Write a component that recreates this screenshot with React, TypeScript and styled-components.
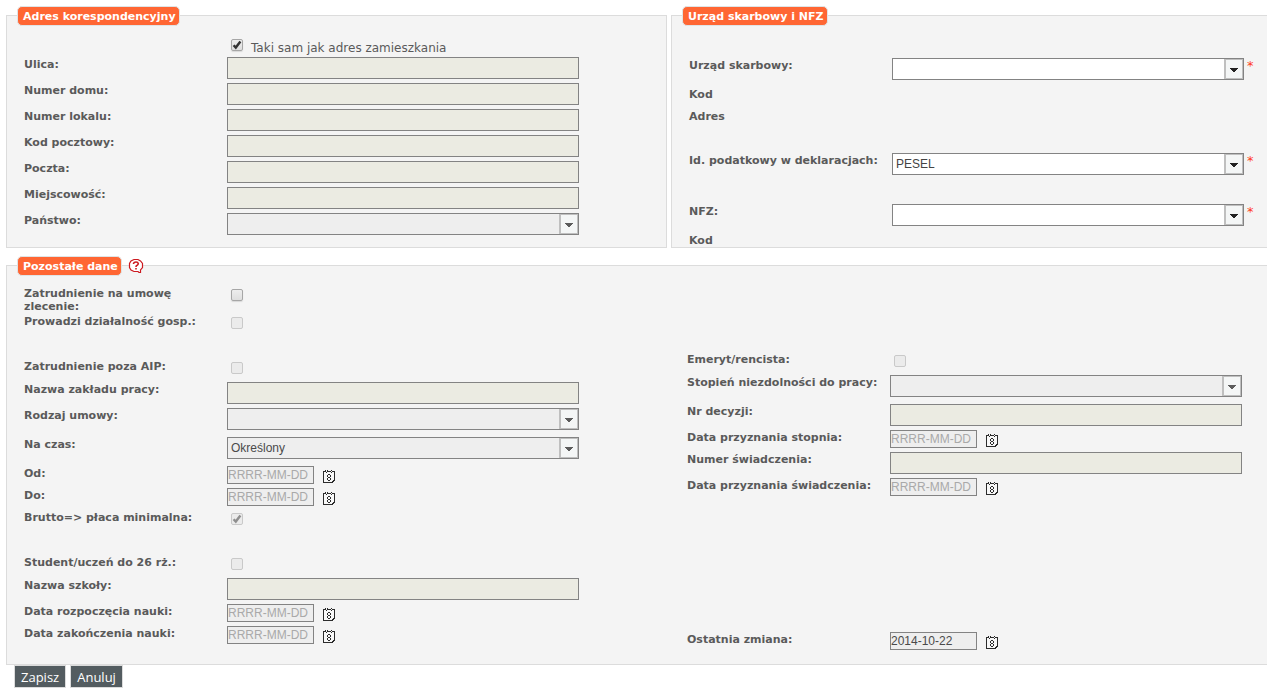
import React from "react";
import styled, { createGlobalStyle, css } from "styled-components";

const GlobalStyle = createGlobalStyle`
  *, *::before, *::after { box-sizing: border-box; }
  body {
    margin: 0;
    background: #fff;
    color: #5a5a5a;
    font-family: Verdana, "DejaVu Sans", sans-serif;
    font-size: 11px;
    line-height: 13px;
  }
`;

const Page = styled.form`
  padding: 6px 0 6px 6px;
  overflow: hidden;
`;

const TopPanels = styled.div`
  display: grid;
  grid-template-columns: 661fr 596fr;
  column-gap: 4px;
  margin-bottom: 8px;
`;

const Panel = styled.fieldset<{ $open?: boolean }>`
  min-width: 0;
  margin: 0;
  padding: 0;
  border: 1px solid #dcdcdc;
  background: #f4f4f4;
  ${(p) => p.$open && css`border-right: 0;`}
`;

const Legend = styled.legend`
  position: relative;
  height: 18px;
  margin-left: 10px;
  padding: 0;
`;

const Badge = styled.span`
  display: block;
  height: 20px;
  padding: 0 3px 0 5px;
  border: 1px solid #dfe4e6;
  border-radius: 5px;
  background: #ff6633;
  color: #fff;
  font-weight: bold;
  line-height: 19px;
  white-space: nowrap;
`;

const HelpButton = styled.button`
  position: absolute;
  top: 2px;
  left: calc(100% + 6px);
  display: block;
  width: 16px;
  height: 16px;
  padding: 0;
  border: 0;
  background: none;
`;

const Columns = styled.div`
  display: grid;
  grid-template-columns: 663fr 597fr;
  padding: 12px 0 10px;
`;

const Column = styled.div<{ $top?: number; $bottom?: number }>`
  display: flex;
  flex-direction: column;
  gap: 22px;
  min-width: 0;
  padding: ${(p) => p.$top ?? 0}px 0 ${(p) => p.$bottom ?? 0}px 17px;
`;

const Group = styled.div<{ $before?: number }>`
  margin-top: ${(p) => p.$before ?? 0}px;
`;

const rowHeights = { date: 22, plain: 22, check: 23, input: 26, tall: 28, select: 29, last: 14 };
type RowKind = keyof typeof rowHeights;

const RowBox = styled.div<{ $kind: RowKind }>`
  display: flex;
  align-items: flex-start;
  height: ${(p) => rowHeights[p.$kind]}px;
`;

const LabelCell = styled.label`
  flex: 0 0 203px;
  padding: 1px 10px 0 0;
  font-weight: bold;
`;

const TextLabel = styled.span`
  padding-top: 1px;
  font-weight: bold;
`;

const controlBorder = css`
  border: 1px solid #838383;
  border-radius: 0;
  margin: 0;
  font-family: Arial, "Liberation Sans", sans-serif;
  font-size: 12px;
`;

const TextInput = styled.input`
  ${controlBorder}
  width: 352px;
  height: 22px;
  padding: 0 3px;
  background: #ebebe2;
`;

const DateInput = styled.input`
  ${controlBorder}
  width: 87px;
  height: 18px;
  padding: 0;
  background: #eeeeee;
  color: #4a4a4a;
  &::placeholder { color: #a9a9a9; opacity: 1; }
`;

const IconButton = styled.button`
  display: block;
  width: 13px;
  height: 14px;
  margin: 4px 0 0 9px;
  padding: 0;
  border: 0;
  background: none;
`;

const SelectWrap = styled.span`
  position: relative;
  display: block;
  width: 352px;
  height: 22px;
`;

const NativeSelect = styled.select`
  ${controlBorder}
  appearance: none;
  width: 100%;
  height: 100%;
  padding: 0 22px 0 3px;
  background: #fff;
  color: #444;
  &:disabled { background: #eeeeee; color: #4a4a4a; opacity: 1; }
`;

const Arrow = styled.span<{ $muted?: boolean }>`
  position: absolute;
  top: 1px;
  right: 1px;
  display: flex;
  align-items: center;
  justify-content: center;
  width: 19px;
  height: 20px;
  padding-top: 2px;
  border: 1px solid #bfbfbf;
  border-left-width: 2px;
  background: #f4f6f6;
  color: ${(p) => (p.$muted ? "#5c5c5c" : "#222")};
  pointer-events: none;
`;

const Required = styled.span`
  margin-left: 3px;
  color: #ff3a20;
  font-size: 13px;
  line-height: 15px;
`;

const Check = styled.input`
  appearance: none;
  flex: none;
  width: 12px;
  height: 12px;
  margin: 3px 0 0 4px;
  border: 1px solid #a6a6a6;
  border-radius: 2px;
  background: linear-gradient(#ededed, #dedede);
  box-shadow: 0 1px 1px #d8d8d8;
  &:disabled { border-color: #c9c9c9; background: #ebebeb; box-shadow: none; }
`;

const CheckHolder = styled.span`
  position: relative;
  display: block;
  height: 16px;
`;

const Tick = styled.svg`
  position: absolute;
  top: 3px;
  left: 4px;
  pointer-events: none;
`;

const SameAddress = styled.div`
  display: flex;
  height: 21px;
  margin-top: 12px;
  padding-left: 203px;
`;

const SameLabel = styled.label`
  padding: 4px 0 0 8px;
  font-size: 12px;
  line-height: 16px;
`;

const Actions = styled.div`
  display: flex;
  gap: 4px;
  padding-left: 8px;
`;

const ActionButton = styled.button`
  height: 23px;
  padding: 0 6px;
  border: 1px solid #dcdcdc;
  background: #535c60;
  color: #fff;
  font-family: "Open Sans", sans-serif;
  font-size: 13px;
  line-height: 20px;
`;

function CalendarIcon() {
  return (
    <svg width="13" height="14" viewBox="0 0 13 14" fill="none" stroke="#2c2c2c" shapeRendering="crispEdges">
      <path d="M1 2H12V10H9V13H1Z" fill="#f8f8f8" stroke="none" />
      <path d="M.5 1V13M0 12.5H9M11.5 1V10M0 1.5H3M4 1.5H8M9 1.5H12M2 .5H3M4 .5H5M8 .5H9M3 2.5H4M8 2.5H9M9 12.5H10M10 11.5H11M11 10.5H12M9 11.5H11M10 10.5H12" />
      <path d="M5 4.5H7M5 7.5H7M5 10.5H7M4.5 5V7M7.5 5V7M4.5 8V10M7.5 8V10" />
    </svg>
  );
}

function HelpIcon() {
  return (
    <svg width="16" height="16" viewBox="0 0 16 16" fill="none" stroke="#cc1a20">
      <path d="M6 1.5H10L12.5 3 14.5 5.5V9.5L12.5 12V14.5H11L10 13.5H6L3 12 1.5 9.5V5.5L3 3Z" fill="#fff" strokeWidth="1.2" />
      <path d="M5.6 6V5.2Q6 4 8 4T10.3 5.6Q10.3 6.8 8.8 7.5 8 7.8 8 9M8 10V11.6" strokeWidth="1.6" />
    </svg>
  );
}

function Row({ label, id, kind, children }: { label: string; id: string; kind: RowKind; children: React.ReactNode }) {
  return (
    <RowBox $kind={kind}>
      <LabelCell htmlFor={id}>{label}</LabelCell>
      {children}
    </RowBox>
  );
}

function Caption({ text, kind }: { text: string; kind: RowKind }) {
  return (
    <RowBox $kind={kind}>
      <TextLabel>{text}</TextLabel>
    </RowBox>
  );
}

function InputRow({ label, id }: { label: string; id: string }) {
  return (
    <Row label={label} id={id} kind="input">
      <TextInput id={id} type="text" disabled />
    </Row>
  );
}

function SelectRow({ label, id, value = "", required }: { label: string; id: string; value?: string; required?: boolean }) {
  return (
    <Row label={label} id={id} kind="select">
      <SelectWrap>
        <NativeSelect id={id} defaultValue={value} disabled={!required} required={required}>
          <option value={value}>{value}</option>
        </NativeSelect>
        <Arrow $muted={!required} aria-hidden="true">
          <svg width="8" height="4" viewBox="0 0 8 4" shapeRendering="crispEdges">
            <path d="M0 0H8V1H7V2H6V3H5V4H3V3H2V2H1V1H0Z" fill="currentColor" />
          </svg>
        </Arrow>
      </SelectWrap>
      {required && <Required>*</Required>}
    </Row>
  );
}

function DateRow({ label, id, value }: { label: string; id: string; value?: string }) {
  return (
    <Row label={label} id={id} kind="date">
      <DateInput id={id} type="text" placeholder="RRRR-MM-DD" defaultValue={value} disabled />
      <IconButton type="button" aria-label="Kalendarz">
        <CalendarIcon />
      </IconButton>
    </Row>
  );
}

function CheckBox({ id, checked, disabled }: { id: string; checked?: boolean; disabled?: boolean }) {
  const [on, setOn] = React.useState(Boolean(checked));
  return (
    <CheckHolder>
      <Check id={id} type="checkbox" checked={on} disabled={disabled} onChange={(e) => setOn(e.target.checked)} />
      {on && (
        <Tick width="12" height="12" viewBox="0 0 12 12" fill="none" stroke={disabled ? "#8f8f8f" : "#333"} strokeWidth="2.4">
          <path d="M2.6 6.2L4.8 8.6L9.4 2.6" />
        </Tick>
      )}
    </CheckHolder>
  );
}

function CheckRow({ label, id, kind = "check", checked, disabled = true }: { label: string; id: string; kind?: RowKind; checked?: boolean; disabled?: boolean }) {
  return (
    <Row label={label} id={id} kind={kind}>
      <CheckBox id={id} checked={checked} disabled={disabled} />
    </Row>
  );
}

export default function App() {
  return (
    <>
      <GlobalStyle />
      <Page onSubmit={(e) => e.preventDefault()}>
        <TopPanels>
          <Panel>
            <Legend><Badge>Adres korespondencyjny</Badge></Legend>
            <Column $bottom={5}>
              <Group>
                <SameAddress>
                  <CheckBox id="same" checked />
                  <SameLabel htmlFor="same">Taki sam jak adres zamieszkania</SameLabel>
                </SameAddress>
                <InputRow label="Ulica:" id="street" />
                <InputRow label="Numer domu:" id="house" />
                <InputRow label="Numer lokalu:" id="flat" />
                <InputRow label="Kod pocztowy:" id="zip" />
                <InputRow label="Poczta:" id="post" />
                <InputRow label="Miejscowość:" id="city" />
                <SelectRow label="Państwo:" id="country" />
              </Group>
            </Column>
          </Panel>
          <Panel $open>
            <Legend><Badge>Urząd skarbowy i NFZ</Badge></Legend>
            <Column $top={34}>
              <Group>
                <SelectRow label="Urząd skarbowy:" id="office" required />
                <Caption text="Kod" kind="plain" />
                <Caption text="Adres" kind="plain" />
              </Group>
              <SelectRow label="Id. podatkowy w deklaracjach:" id="taxid" value="PESEL" required />
              <Group>
                <SelectRow label="NFZ:" id="nfz" required />
                <Caption text="Kod" kind="last" />
              </Group>
            </Column>
          </Panel>
        </TopPanels>
        <Panel $open>
          <Legend>
            <Badge>Pozostałe dane</Badge>
            <HelpButton type="button" aria-label="Pomoc"><HelpIcon /></HelpButton>
          </Legend>
          <Columns>
            <Column>
              <Group>
                <CheckRow label="Zatrudnienie na umowę zlecenie:" id="contract" kind="tall" disabled={false} />
                <CheckRow label="Prowadzi działalność gosp.:" id="business" />
              </Group>
              <Group>
                <CheckRow label="Zatrudnienie poza AIP:" id="outside" />
                <InputRow label="Nazwa zakładu pracy:" id="employer" />
                <SelectRow label="Rodzaj umowy:" id="kind" />
                <SelectRow label="Na czas:" id="term" value="Określony" />
                <DateRow label="Od:" id="from" />
                <DateRow label="Do:" id="to" />
                <CheckRow label="Brutto=> płaca minimalna:" id="gross" checked />
              </Group>
              <Group>
                <CheckRow label="Student/uczeń do 26 rż.:" id="student" />
                <InputRow label="Nazwa szkoły:" id="school" />
                <DateRow label="Data rozpoczęcia nauki:" id="start" />
                <DateRow label="Data zakończenia nauki:" id="end" />
              </Group>
            </Column>
            <Column $top={66}>
              <Group>
                <CheckRow label="Emeryt/rencista:" id="pension" />
                <SelectRow label="Stopień niezdolności do pracy:" id="degree" />
                <InputRow label="Nr decyzji:" id="decision" />
                <DateRow label="Data przyznania stopnia:" id="degreeDate" />
                <InputRow label="Numer świadczenia:" id="benefit" />
                <DateRow label="Data przyznania świadczenia:" id="benefitDate" />
              </Group>
              <Group $before={110}>
                <DateRow label="Ostatnia zmiana:" id="changed" value="2014-10-22" />
              </Group>
            </Column>
          </Columns>
        </Panel>
        <Actions>
          <ActionButton type="submit">Zapisz</ActionButton>
          <ActionButton type="button">Anuluj</ActionButton>
        </Actions>
      </Page>
    </>
  );
}
